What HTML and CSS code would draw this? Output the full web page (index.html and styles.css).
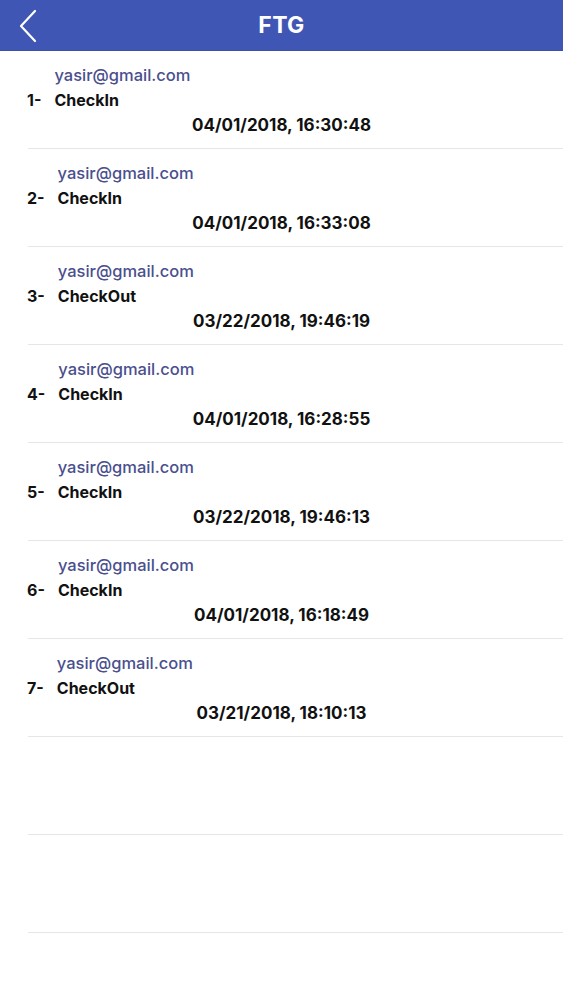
FILE: index.html
```html
<!DOCTYPE html>
<html>
<head>
<meta charset="utf-8">
<link rel="stylesheet" href="styles.css">
</head>
<body>
<header class="nav">
  <svg class="back" width="18" height="34" viewBox="0 0 18 34"><polyline points="15,2 1,17 15,32" fill="none" stroke="#fff" stroke-width="2.2" stroke-linecap="round" stroke-linejoin="round"/></svg>
  <h1 class="title">FTG</h1>
</header>
<ul class="list">
  <li class="item"><span class="email">yasir@gmail.com</span><span class="num">1-</span><span class="type">CheckIn</span><span class="date">04/01/2018, 16:30:48</span></li>
  <li class="item"><span class="email">yasir@gmail.com</span><span class="num">2-</span><span class="type">CheckIn</span><span class="date">04/01/2018, 16:33:08</span></li>
  <li class="item"><span class="email">yasir@gmail.com</span><span class="num">3-</span><span class="type">CheckOut</span><span class="date">03/22/2018, 19:46:19</span></li>
  <li class="item"><span class="email">yasir@gmail.com</span><span class="num">4-</span><span class="type">CheckIn</span><span class="date">04/01/2018, 16:28:55</span></li>
  <li class="item"><span class="email">yasir@gmail.com</span><span class="num">5-</span><span class="type">CheckIn</span><span class="date">03/22/2018, 19:46:13</span></li>
  <li class="item"><span class="email">yasir@gmail.com</span><span class="num">6-</span><span class="type">CheckIn</span><span class="date">04/01/2018, 16:18:49</span></li>
  <li class="item"><span class="email">yasir@gmail.com</span><span class="num">7-</span><span class="type">CheckOut</span><span class="date">03/21/2018, 18:10:13</span></li>
  <li class="item empty"></li>
  <li class="item empty"></li>
  <li class="item empty"></li>
</ul>
</body>
</html>
```

FILE: styles.css
```css
* { box-sizing: border-box; }
html, body { margin: 0; padding: 0; background: #fff; }
body {
  font-family: Inter, "Liberation Sans", Arial, sans-serif;
  color: #111;
  overflow: hidden;
  height: 1000px;
}
.nav {
  height: 51px;
  background: #3f56b4;
  display: flex;
  align-items: center;
  justify-content: center;
  position: relative;
  border-bottom: 1px solid #3a4fa6;
}
.back {
  position: absolute;
  left: 20px;
  top: 9px;
}
.title {
  margin: 0;
  color: #fff;
  font-size: 23px;
  font-weight: 700;
  letter-spacing: 0.3px;
}
.list {
  list-style: none;
  margin: 0;
  padding: 0;
}
.item {
  height: 98px;
  margin-left: 28px;
  padding-top: 12px;
  border-bottom: 1px solid #e6e6e6;
  display: grid;
  grid-template-columns: auto 1fr;
  grid-template-rows: 25px 25px 25px;
  column-gap: 13px;
  align-items: center;
  font-size: 16px;
  line-height: 25px;
}
.email {
  grid-column: 2;
  grid-row: 1;
  color: #4a4f8e;
  font-weight: 500;
  font-size: 16.5px;
}
.num {
  grid-column: 1;
  grid-row: 2;
  font-weight: 700;
  margin-left: -1px;
}
.type {
  grid-column: 2;
  grid-row: 2;
  font-weight: 700;
}
.date {
  grid-column: 1 / -1;
  grid-row: 3;
  font-weight: 700;
  font-size: 17px;
  text-align: center;
  margin-left: -28px;
}
```
